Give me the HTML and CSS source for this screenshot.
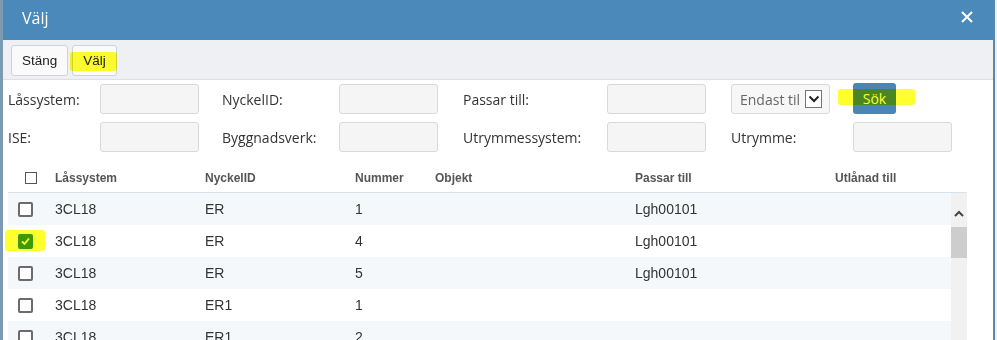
FILE: index.html
```html
<!DOCTYPE html>
<html lang="sv">
<head>
<meta charset="utf-8">
<title>Välj</title>
<link rel="stylesheet" href="styles.css">
</head>
<body>
<div class="dialog">
  <div class="titlebar">
    <span class="title">Välj</span>
    <svg class="close" width="12" height="12" viewBox="0 0 12 12"><path d="M1 1L11 11M11 1L1 11" stroke="#fff" stroke-width="2" fill="none"/></svg>
  </div>
  <div class="toolbar">
    <button class="btn">Stäng</button>
    <button class="btn hl-wrap">Välj<span class="hl hl-valj"></span></button>
  </div>
  <div class="form">
    <label class="lbl">Låssystem:</label><div class="inp"></div>
    <label class="lbl">NyckelID:</label><div class="inp"></div>
    <label class="lbl">Passar till:</label><div class="inp"></div>
    <div class="select"><span class="sel-text">Endast til</span><span class="sel-arrow"><svg width="12" height="8" viewBox="0 0 12 8"><path d="M1.5 1.5L6 6L10.5 1.5" stroke="#222" stroke-width="2" fill="none"/></svg></span></div>
    <div class="sok-cell"><button class="sok hl-wrap">Sök<span class="hl hl-sok"></span></button></div>
    <label class="lbl">ISE:</label><div class="inp"></div>
    <label class="lbl">Byggnadsverk:</label><div class="inp"></div>
    <label class="lbl">Utrymmessystem:</label><div class="inp"></div>
    <label class="lbl">Utrymme:</label><div class="inp"></div>
  </div>
  <div class="table">
    <div class="thead">
      <div class="c c0"><span class="hcb"></span></div>
      <div class="c c1">Låssystem</div>
      <div class="c c2">NyckelID</div>
      <div class="c c3">Nummer</div>
      <div class="c c4">Objekt</div>
      <div class="c c5">Passar till</div>
      <div class="c c6">Utlånad till</div>
    </div>
    <div class="tbody">
      <div class="rows">
        <div class="row alt"><div class="c c0"><span class="cb"></span></div><div class="c c1">3CL18</div><div class="c c2">ER</div><div class="c c3">1</div><div class="c c4"></div><div class="c c5">Lgh00101</div><div class="c c6"></div></div>
        <div class="row"><div class="c c0 hl-wrap"><span class="cb checked"><svg width="11" height="11" viewBox="0 0 11 11"><path d="M2 5.5L4.5 8L9 2.5" stroke="#fff" stroke-width="1.8" fill="none"/></svg></span><span class="hl hl-cb"></span></div><div class="c c1">3CL18</div><div class="c c2">ER</div><div class="c c3">4</div><div class="c c4"></div><div class="c c5">Lgh00101</div><div class="c c6"></div></div>
        <div class="row alt"><div class="c c0"><span class="cb"></span></div><div class="c c1">3CL18</div><div class="c c2">ER</div><div class="c c3">5</div><div class="c c4"></div><div class="c c5">Lgh00101</div><div class="c c6"></div></div>
        <div class="row"><div class="c c0"><span class="cb"></span></div><div class="c c1">3CL18</div><div class="c c2">ER1</div><div class="c c3">1</div><div class="c c4"></div><div class="c c5"></div><div class="c c6"></div></div>
        <div class="row alt"><div class="c c0"><span class="cb"></span></div><div class="c c1">3CL18</div><div class="c c2">ER1</div><div class="c c3">2</div><div class="c c4"></div><div class="c c5"></div><div class="c c6"></div></div>
      </div>
      <div class="scrollbar">
        <div class="sb-up"><svg width="10" height="7" viewBox="0 0 10 7"><path d="M1 6L5 2L9 6" stroke="#444" stroke-width="2" fill="none"/></svg></div>
        <div class="sb-thumb"></div>
      </div>
    </div>
  </div>
</div>
</body>
</html>
```
FILE: styles.css
```css
html, body {
  margin: 0;
  padding: 0;
  height: 340px;
  overflow: hidden;
  background: #eef1f4;
}
.dialog {
  width: 990px;
  height: 340px;
  border-left: 3px solid #7d9ab2;
  border-right: 2px solid #5b87a8;
  background: #fff;
  font-family: "Open Sans", sans-serif;
  color: #333;
  overflow: hidden;
}
.titlebar {
  height: 40px;
  background: #4a89b9;
  display: flex;
  align-items: center;
  justify-content: space-between;
  padding: 0 20px 0 19px;
  box-sizing: border-box;
}
.title {
  color: #fff;
  font-size: 16px;
  margin-top: -5px;
}
.close {
  margin-top: -6px;
}
.toolbar {
  height: 40px;
  box-sizing: border-box;
  background: #eef0f3;
  border-bottom: 1px solid #dcdfe3;
  display: flex;
  gap: 4px;
  padding: 5px 8px 0;
}
.btn {
  position: relative;
  height: 31px;
  padding: 0 10px;
  border: 1px solid #cfd2d6;
  border-radius: 3px;
  background: #fafafa;
  font-family: "Liberation Sans", Arial, sans-serif;
  font-size: 13.5px;
  color: #222;
}
.hl-wrap { position: relative; }
.hl {
  position: absolute;
  background: #ffff30;
  mix-blend-mode: multiply;
  border-radius: 3px;
  pointer-events: none;
}
.hl-valj { left: -3px; right: -1px; top: 6px; height: 19px; }
.hl-sok { left: -15px; right: -19px; top: 6px; height: 16px; }
.hl-cb { left: -3px; top: 5px; width: 40px; height: 21px; }
.form {
  display: grid;
  grid-template-columns: 92px 122px 117px 124px 144px 124px 122px 100px;
  grid-auto-rows: 30px;
  row-gap: 8px;
  padding: 4px 0 0 5px;
  align-items: center;
  font-size: 14px;
}
.lbl { color: #333; }
.inp {
  width: 99px;
  height: 30px;
  box-sizing: border-box;
  border: 1px solid #d9d9d9;
  border-radius: 3px;
  background: #f5f5f5;
}
.select {
  width: 99px;
  height: 30px;
  box-sizing: border-box;
  border: 1px solid #d9d9d9;
  border-radius: 3px;
  background: #f7f7f7;
  display: flex;
  align-items: center;
  padding-left: 8px;
  overflow: hidden;
}
.sel-text {
  color: #666;
  white-space: nowrap;
  width: 64px;
  overflow: hidden;
}
.sel-arrow {
  width: 17px;
  height: 18px;
  box-sizing: border-box;
  border: 1px solid #767676;
  background: #fff;
  display: flex;
  align-items: center;
  justify-content: center;
  margin-left: 1px;
}
.sok-cell { align-self: start; margin-top: -1px; }
.sok {
  position: relative;
  height: 31px;
  width: 43px;
  border: none;
  border-radius: 3px;
  background: #4a86b4;
  color: #fff;
  font-family: "Open Sans", sans-serif;
  font-size: 14px;
  padding: 0;
}
.table {
  margin: 8px 0 0 5px;
  width: 959px;
  font-family: "Liberation Sans", Arial, sans-serif;
}
.thead {
  display: flex;
  height: 32px;
  box-sizing: border-box;
  padding-top: 3px;
  align-items: center;
  border-bottom: 1px solid #d9e1e8;
  font-size: 12px;
  font-weight: bold;
  color: #555;
  height: 33px;
}
.c { flex: none; }
.c0 { width: 47px; display: flex; align-items: center; height: 100%; }
.c1 { width: 150px; }
.c2 { width: 150px; }
.c3 { width: 80px; }
.c4 { width: 200px; }
.c5 { width: 200px; }
.c6 { flex: 1; }
.hcb {
  margin-left: 17px;
  width: 12px;
  height: 12px;
  box-sizing: border-box;
  border: 1px solid #555;
  background: #fff;
}
.tbody {
  display: flex;
}
.rows { width: 943px; }
.row {
  display: flex;
  height: 32px;
  align-items: center;
  font-size: 14px;
  color: #333;
  background: #fff;
}
.row.alt { background: #f5f8fb; }
.cb {
  margin-left: 10px;
  width: 15px;
  height: 15px;
  box-sizing: border-box;
  border: 2px solid #6b6b6b;
  border-radius: 2px;
  background: #fff;
  display: flex;
  align-items: center;
  justify-content: center;
}
.cb.checked {
  background: #3c9a2e;
  border-color: #3c9a2e;
}
.scrollbar {
  width: 16px;
  background: #f1f1f1;
  display: flex;
  flex-direction: column;
}
.sb-up {
  height: 34px;
  display: flex;
  align-items: center;
  justify-content: center;
  padding-top: 6px;
  box-sizing: border-box;
}
.sb-thumb {
  height: 31px;
  background: #cdcdcd;
}
```
